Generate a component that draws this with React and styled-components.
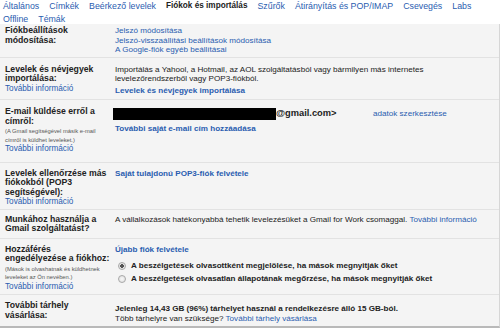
import styled, { createGlobalStyle } from "styled-components";

const GlobalStyle = createGlobalStyle`
  html, body {
    margin: 0;
    padding: 0;
    background: #fff;
  }
  body {
    font-family: "Liberation Sans", Arial, sans-serif;
    color: #222;
  }
`;

const tabs = [
  "Általános",
  "Címkék",
  "Beérkező levelek",
  "Fiókok és importálás",
  "Szűrők",
  "Átirányítás és POP/IMAP",
  "Csevegés",
  "Labs",
  "Offline",
  "Témák",
];

function App() {
  return (
    <Page>
      <GlobalStyle />
      <Tabs>
        {tabs.map((t) => (
          <Tab key={t} $active={t === "Fiókok és importálás"}>
            {t}
          </Tab>
        ))}
      </Tabs>

      <Panel>
        <Row $pad="2px 0 2px">
          <Label>Fiókbeállítások módosítása:</Label>
          <Cell>
            <Link>Jelszó módosítása</Link>
            <Link>Jelszó-visszaállítási beállítások módosítása</Link>
            <Link>A Google-fiók egyéb beállításai</Link>
          </Cell>
        </Row>

        <Row $pad="7px 0 4px">
          <Label>
            Levelek és névjegyek importálása:
            <Link>További információ</Link>
          </Label>
          <Cell>
            <Para>
              Importálás a Yahool, a Hotmail, az AOL szolgáltatásból vagy
              bármilyen más internetes levelezőrendszerből vagy POP3-fiókból.
            </Para>
            <Link $bold $gap="2px">
              Levelek és névjegyek importálása
            </Link>
          </Cell>
        </Row>

        <Row $pad="7px 0 8px">
          <Label>
            E-mail küldése erről a címről:
            <Note>(A Gmail segítségével másik e-mail címről is küldhet leveleket.)</Note>
            <Link>További információ</Link>
          </Label>
          <Cell>
            <AddressLine>
              <Address>
                <Redacted />
                <Email>@gmail.com&gt;</Email>
              </Address>
              <Link $inline>adatok szerkesztése</Link>
            </AddressLine>
            <Link $bold $gap="3px">
              További saját e-mail cím hozzáadása
            </Link>
          </Cell>
        </Row>

        <Row $pad="6px 0 2px">
          <Label>
            Levelek ellenőrzése más fiókokból (POP3 segítségével):
            <Link>További információ</Link>
          </Label>
          <Cell>
            <Link $bold>Saját tulajdonú POP3-fiók felvétele</Link>
          </Cell>
        </Row>

        <Row $pad="5px 0 4px">
          <Label>Munkához használja a Gmail szolgáltatást?</Label>
          <Cell>
            <span>
              A vállalkozások hatékonyabbá tehetik levelezésüket a Gmail for
              Work csomaggal. <Link $inline>További információ</Link>
            </span>
          </Cell>
        </Row>

        <Row $pad="6px 0 3px">
          <Label>
            Hozzáférés engedélyezése a fiókhoz:
            <Note>(Mások is olvashatnak és küldhetnek leveleket az Ön nevében.)</Note>
            <Link>További információ</Link>
          </Label>
          <Cell>
            <Link $bold>Újabb fiók felvétele</Link>
            <Options>
              <Option>
                <Radio $checked />A beszélgetések olvasottként megjelölése, ha
                mások megnyitják őket
              </Option>
              <Option>
                <Radio />A beszélgetések olvasatlan állapotának megőrzése, ha
                mások megnyitják őket
              </Option>
            </Options>
          </Cell>
        </Row>

        <Row $pad="6px 0 3px" $last>
          <Label>További tárhely vásárlása:</Label>
          <Cell $offset="3px">
            <strong>
              Jelenleg 14,43 GB (96%) tárhelyet használ a rendelkezésre álló 15
              GB-ból.
            </strong>
            <span>
              Több tárhelyre van szüksége?{" "}
              <Link $inline>További tárhely vásárlása</Link>
            </span>
          </Cell>
        </Row>
      </Panel>
    </Page>
  );
}

const Page = styled.div`
  width: 500px;
  height: 332px;
  overflow: hidden;
  font-size: 8.1px;
  line-height: 9.5px;
`;

const Tabs = styled.nav`
  display: flex;
  flex-wrap: wrap;
  column-gap: 10px;
  row-gap: 3px;
  padding: 1px 3px 0;
  font-size: 8.8px;
  line-height: 10px;
`;

const Tab = styled.span`
  color: ${(p) => (p.$active ? "#222" : "#2a5db0")};
  font-weight: ${(p) => (p.$active ? "bold" : "normal")};
  font-size: ${(p) => (p.$active ? "8.2px" : "inherit")};
`;

const Panel = styled.div`
  background: #f4f4f4;
  border-right: 1px solid #d6d6d6;
  border-bottom: 2px solid #b9b9b9;
`;

const Row = styled.div`
  display: grid;
  grid-template-columns: 110px 1fr;
  padding: ${(p) => p.$pad};
  padding-left: 5px;
  border-bottom: ${(p) => (p.$last ? "none" : "1px solid #e2e2e2")};
`;

const Label = styled.div`
  display: flex;
  flex-direction: column;
  align-items: flex-start;
  padding-right: 4px;
  font-size: 8.7px;
  font-weight: bold;
  color: #222;

  & > a {
    font-size: 8.2px;
    font-weight: normal;
  }
`;

const Note = styled.span`
  max-width: 96px;
  margin-top: 1px;
  font-size: 5.8px;
  line-height: 8.5px;
  font-weight: normal;
  color: #555;
`;

const Cell = styled.div`
  display: flex;
  flex-direction: column;
  align-items: flex-start;
  padding-top: ${(p) => p.$offset || "0"};
  color: #222;
  white-space: nowrap;
`;

const Para = styled.p`
  margin: 0;
  max-width: 330px;
  white-space: normal;
`;

const Link = styled.a`
  display: ${(p) => (p.$inline ? "inline" : "block")};
  margin-top: ${(p) => p.$gap || "0"};
  color: #2a5db0;
  font-weight: ${(p) => (p.$bold ? "bold" : "normal")};
  cursor: pointer;
`;

const AddressLine = styled.div`
  display: flex;
  align-items: center;
  height: 14px;
`;

const Address = styled.div`
  display: flex;
  align-items: center;
  width: 260px;
  margin-left: -2px;
`;

const Redacted = styled.span`
  display: inline-block;
  width: 163px;
  height: 12px;
  background: #000;
`;

const Email = styled.strong`
  font-size: 9.3px;
`;

const Options = styled.div`
  display: flex;
  flex-direction: column;
  gap: 3px;
  margin-top: 7px;
  font-weight: bold;
`;

const Option = styled.label`
  display: flex;
  align-items: center;
  gap: 5px;
  padding-left: 3px;
  line-height: 10px;
`;

const Radio = styled.span`
  width: 6px;
  height: 6px;
  border-radius: 50%;
  border: 1px solid #a8a8a8;
  background: ${(p) =>
    p.$checked
      ? "radial-gradient(circle, #555 0 1.6px, #e6e6e6 2px)"
      : "radial-gradient(circle, #f8f8f8, #dcdcdc)"};
`;

export default App;
